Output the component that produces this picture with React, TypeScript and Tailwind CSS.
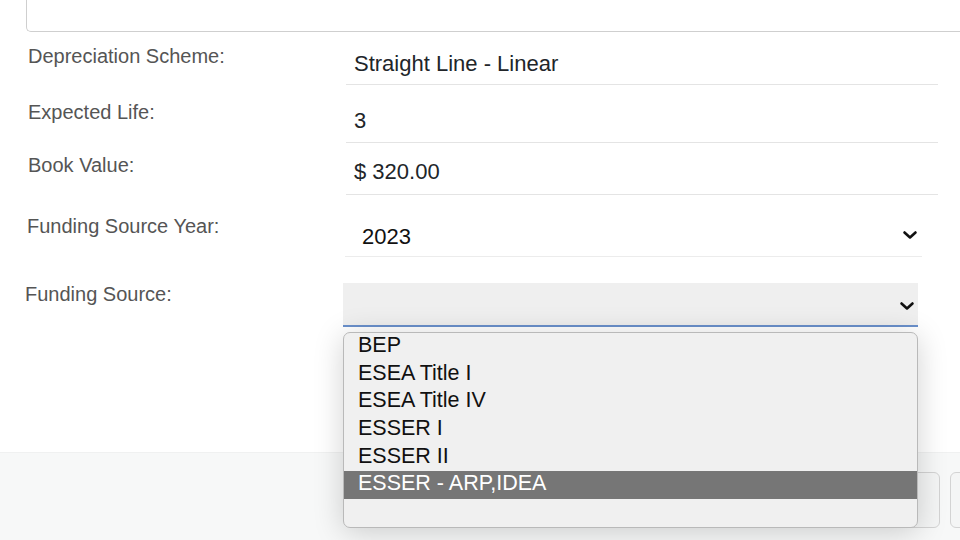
import React from "react";

function Chevron({ className }: { className?: string }) {
  return (
    <svg
      viewBox="0 0 16 16"
      className={className}
      fill="none"
      stroke="#111"
      strokeWidth="2.6"
      strokeLinecap="round"
      strokeLinejoin="round"
    >
      <path d="M2.5 5.5 8 10.5l5.5-5" />
    </svg>
  );
}

const options = [
  "BEP",
  "ESEA Title I",
  "ESEA Title IV",
  "ESSER I",
  "ESSER II",
  "ESSER - ARP,IDEA",
];

export default function App() {
  return (
    <div className="relative w-[960px] h-[540px] overflow-hidden bg-white font-['Liberation_Sans',Arial,sans-serif]">
      {/* textarea bottom edge */}
      <div className="ml-[26px] w-[980px] h-[32px] border-l border-b border-[#cfcfcf] rounded-bl-[5px]" />

      <div className="flex h-[53px]">
        <div className="pl-[28px] w-[346px] mt-[12px] text-[20px] leading-[24px] text-[#555]">
          Depreciation Scheme:
        </div>
        <div className="w-[592px] pt-[19px] pl-[8px] border-b border-[#e4e4e4] text-[22px] leading-[26px] text-[#212529]">
          Straight Line - Linear
        </div>
      </div>

      <div className="flex h-[58px]">
        <div className="pl-[28px] w-[346px] mt-[15px] text-[20px] leading-[24px] text-[#555]">
          Expected Life:
        </div>
        <div className="w-[592px] pt-[23px] pl-[8px] border-b border-[#e4e4e4] text-[22px] leading-[26px] text-[#212529]">
          3
        </div>
      </div>

      <div className="flex h-[52px]">
        <div className="pl-[28px] w-[346px] mt-[10px] text-[20px] leading-[24px] text-[#555]">
          Book Value:
        </div>
        <div className="w-[592px] pt-[16px] pl-[8px] border-b border-[#e4e4e4] text-[22px] leading-[26px] text-[#212529]">
          $ 320.00
        </div>
      </div>

      <div className="flex h-[62px]">
        <div className="pl-[27px] w-[345px] mt-[19px] text-[20px] leading-[24px] text-[#555]">
          Funding Source Year:
        </div>
        <div className="w-[577px] pt-[29px] pl-[17px] pr-[4px] border-b border-[#ececec] text-[22px] leading-[26px] text-[#111] flex justify-between">
          <span>2023</span>
          <Chevron className="w-[16px] h-[16px] mt-[3px]" />
        </div>
      </div>

      <div className="flex h-[195px]">
        <div className="pl-[25px] w-[343px] mt-[25px] text-[20px] leading-[24px] text-[#555]">
          Funding Source:
        </div>
        <div className="w-[575px] mt-[26px] flex flex-col self-start">
          <div className="h-[42px] bg-[#efefef] flex items-center justify-end pr-[3px] pt-[3px]">
            <Chevron className="w-[16px] h-[16px]" />
          </div>
          <div className="h-[2px] bg-[#6a90cb]" />
        </div>
      </div>

      {/* modal footer */}
      <div className="h-[88px] bg-[#f7f8f8] border-t border-[#f0f1f1] flex gap-[10px] pl-[860px] pt-[19px]">
        <div className="shrink-0 w-[80px] h-[56px] rounded-[6px] border border-[#d3d3d3] bg-[#f4f5f5]" />
        <div className="shrink-0 w-[90px] h-[56px] rounded-[6px] border border-[#d3d3d3] bg-[#f4f5f5]" />
      </div>

      {/* open select list */}
      <div className="absolute left-[343px] top-[332px] w-[575px] h-[196px] rounded-[7px] border border-[#b9b9b9] bg-[#f0f0f0] shadow-[0_4px_30px_rgba(0,0,0,0.18)] overflow-hidden">
        {options.map((o, i) => (
          <div
            key={o}
            className={
              i === options.length - 1
                ? "h-[27.7px] pl-[14px] text-[21.5px] leading-[25px] bg-[#767676] text-white"
                : "h-[27.7px] pl-[14px] text-[21.5px] leading-[25px] text-[#111]"
            }
          >
            {o}
          </div>
        ))}
      </div>
    </div>
  );
}
